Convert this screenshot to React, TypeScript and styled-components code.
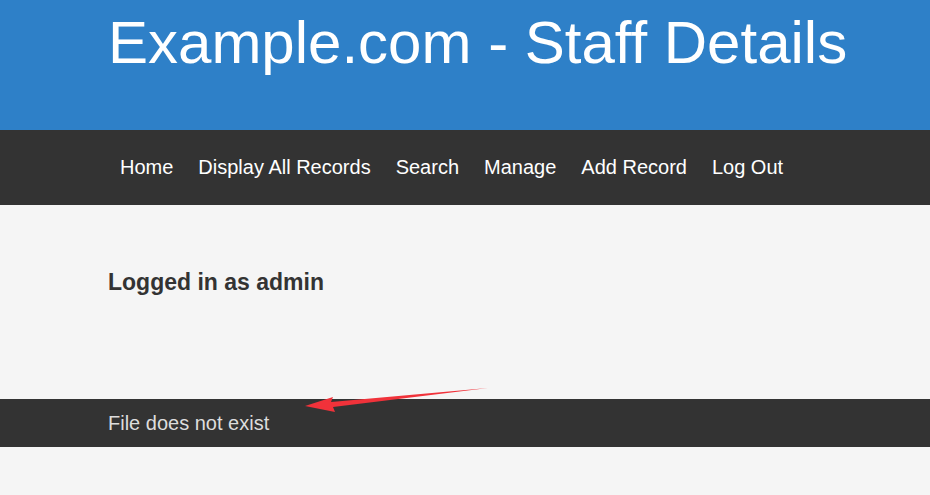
import styled, { createGlobalStyle } from "styled-components";

const Global = createGlobalStyle`
    html, body {
        margin: 0;
        padding: 0;
        background: #f5f5f5;
        font-family: "Liberation Sans", Arial, sans-serif;
    }
`

const links = ["Home", "Display All Records", "Search", "Manage", "Add Record", "Log Out"]

export default function App() {
    return (
        <>
            <Global />
            <Page>
                <Header>
                    <Title>Example.com - Staff Details</Title>
                </Header>
                <Nav>
                    {links.map((link) => (
                        <NavLink key={link} href="#">{link}</NavLink>
                    ))}
                </Nav>
                <Content>
                    <Status>Logged in as admin</Status>
                </Content>
                <Footer>
                    <Message>File does not exist</Message>
                    <Arrow width="200" height="30" viewBox="0 0 200 30">
                        <path d="M185 2 L28 16 L30 11 L2 20 L32 26 L30 21 Z" fill="#f0323a" />
                    </Arrow>
                </Footer>
            </Page>
        </>
    )
}

const Page = styled.div`
    width: 930px;
    min-height: 495px;
    background: #f5f5f5;
`
const Header = styled.header`
    height: 130px;
    background-color: #2e80c8;
    padding: 0 108px;
    box-sizing: border-box;
    overflow: hidden;
`
const Title = styled.h1`
    margin: 0;
    padding-top: 8px;
    color: #fff;
    font-weight: normal;
    font-size: 60px;
    line-height: 70px;
    white-space: nowrap;
`
const Nav = styled.nav`
    height: 75px;
    background-color: #333;
    display: flex;
    align-items: center;
    padding: 0 108px;
    gap: 1px;
`
const NavLink = styled.a`
    color: #fff;
    text-decoration: none;
    font-size: 20px;
    padding: 0 12px;
`
const Content = styled.main`
    height: 194px;
    padding: 0 108px;
    display: flex;
    align-items: center;
`
const Status = styled.h3`
    margin: 0;
    color: #333;
    font-size: 23px;
    font-weight: bold;
    position: relative;
    top: -20px;
`
const Footer = styled.footer`
    position: relative;
    height: 48px;
    background-color: #333;
    padding: 0 108px;
    display: flex;
    align-items: center;
`
const Message = styled.p`
    margin: 0;
    color: #ddd;
    font-size: 20px;
`
const Arrow = styled.svg`
    position: absolute;
    left: 303px;
    top: -13px;
`
